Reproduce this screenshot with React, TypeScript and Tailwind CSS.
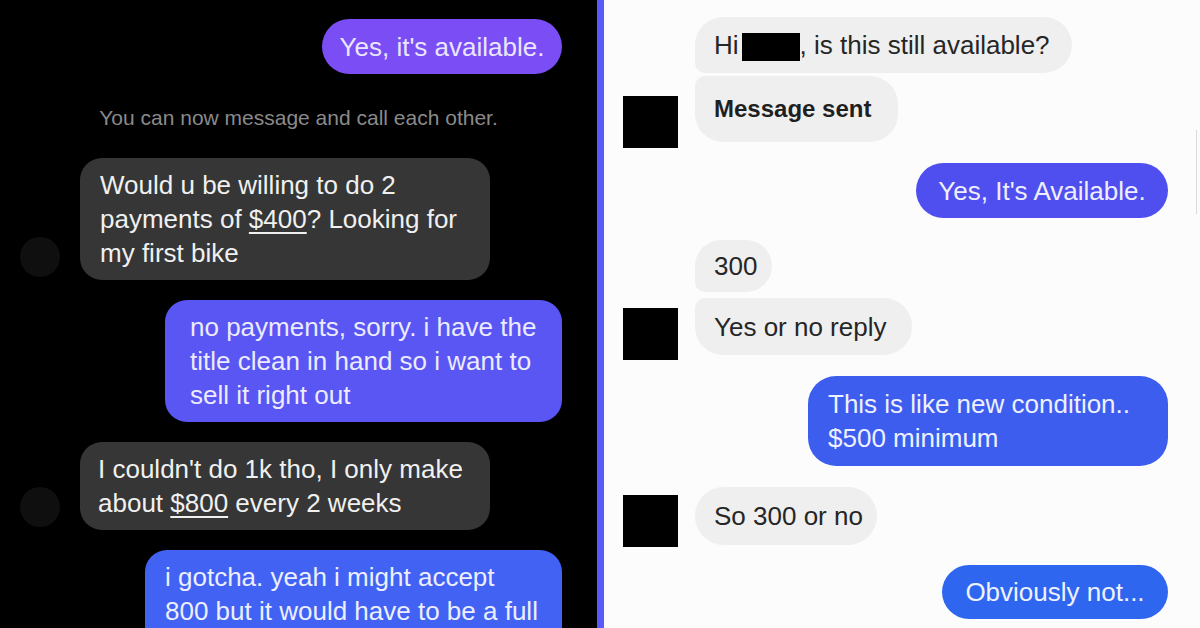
import React from "react";

const font = { fontFamily: '"Liberation Sans", Arial, sans-serif' };

function LeftAvatar() {
  return <div className="w-[40px] h-[40px] rounded-full bg-[#0f0f0f] shrink-0 mb-[3px]" />;
}

function RightAvatar({ mb }: { mb: string }) {
  return <div className={`w-[55px] h-[52px] bg-black shrink-0 ${mb}`} />;
}

export default function App() {
  return (
    <div className="w-[1200px] h-[628px] flex overflow-hidden" style={font}>
      {/* Left dark panel */}
      <div className="w-[597px] h-full bg-black flex flex-col overflow-hidden">
        <div className="ml-[95px] w-[165px] h-[3px] bg-[#2a2a2a] rounded-b-[3px]" />
        <div className="mt-[19px] flex justify-end pr-[35px]">
          <div className="w-[240px] h-[55px] rounded-full bg-[#7a4df5] text-[#ebe6ff] text-[26px] leading-[34px] flex items-center justify-center whitespace-nowrap">
            Yes, it's available.
          </div>
        </div>
        <div className="mt-[32px] text-center text-[21px] leading-[24px] text-[#8a8a8a] whitespace-nowrap">
          You can now message and call each other.
        </div>
        <div className="mt-[28px] flex items-end pl-[20px] gap-[20px]">
          <LeftAvatar />
          <div className="w-[410px] rounded-[22px] bg-[#363636] text-[#f0f0f0] text-[26px] leading-[34px] pl-[20px] py-[10px] whitespace-nowrap">
            Would u be willing to do 2<br />
            payments of <span className="underline underline-offset-[4px]">$400</span>? Looking for<br />
            my first bike
          </div>
        </div>
        <div className="mt-[20px] flex justify-end pr-[35px]">
          <div className="w-[397px] rounded-[22px] bg-[#5956f3] text-[#ecebff] text-[26px] leading-[34px] pl-[25px] py-[10px] whitespace-nowrap">
            no payments, sorry. i have the<br />
            title clean in hand so i want to<br />
            sell it right out
          </div>
        </div>
        <div className="mt-[20px] flex items-end pl-[20px] gap-[20px]">
          <LeftAvatar />
          <div className="w-[410px] rounded-[22px] bg-[#363636] text-[#f0f0f0] text-[26px] leading-[34px] pl-[18px] py-[10px] whitespace-nowrap">
            I couldn't do 1k tho, I only make<br />
            about <span className="underline underline-offset-[4px]">$800</span> every 2 weeks
          </div>
        </div>
        <div className="mt-[20px] flex justify-end pr-[35px]">
          <div className="w-[417px] rounded-[22px] bg-[#4262f4] text-[#ecefff] text-[26px] leading-[34px] pl-[20px] pt-[10px] pb-[40px] whitespace-nowrap">
            i gotcha. yeah i might accept<br />
            800 but it would have to be a full
          </div>
        </div>
      </div>

      {/* Divider */}
      <div className="w-[7px] h-full bg-[#5a5afc]" />

      {/* Right light panel */}
      <div className="relative flex-1 h-full bg-[#fcfcfc] flex flex-col pt-[17px] overflow-hidden">
        <div className="absolute right-[3px] top-[130px] w-[1px] h-[84px] bg-[#d9d9d9]" />
        <div className="flex items-end pl-[19px] gap-[17px]">
          <RightAvatar mb="mb-[-6px]" />
          <div className="flex flex-col items-start gap-[3px]">
            <div className="h-[56px] rounded-[28px] rounded-bl-[10px] bg-[#efefef] text-[#262626] text-[26px] leading-[34px] pl-[19px] pr-[22px] flex items-center whitespace-nowrap">
              Hi
              <span className="inline-block w-[58px] h-[28px] bg-black ml-[3px] mt-[4px]" />
              , is this still available?
            </div>
            <div className="w-[203px] h-[66px] rounded-[28px] rounded-tl-[10px] bg-[#efefef] text-[#1f1f1f] text-[24px] font-bold leading-[34px] pl-[19px] flex items-center whitespace-nowrap">
              Message sent
            </div>
          </div>
        </div>
        <div className="mt-[21px] flex justify-end pr-[32px]">
          <div className="w-[252px] h-[55px] rounded-full bg-[#4f4fef] text-[#eeeeff] text-[26px] leading-[34px] flex items-center justify-center whitespace-nowrap">
            Yes, It's Available.
          </div>
        </div>
        <div className="mt-[22px] flex items-end pl-[19px] gap-[17px]">
          <RightAvatar mb="mb-[-5px]" />
          <div className="flex flex-col items-start gap-[6px]">
            <div className="w-[77px] h-[52px] rounded-[26px] rounded-bl-[10px] bg-[#efefef] text-[#262626] text-[26px] leading-[34px] pl-[19px] flex items-center whitespace-nowrap">
              300
            </div>
            <div className="w-[217px] h-[57px] rounded-[28px] rounded-tl-[10px] bg-[#efefef] text-[#262626] text-[26px] leading-[34px] pl-[19px] flex items-center whitespace-nowrap">
              Yes or no reply
            </div>
          </div>
        </div>
        <div className="mt-[21px] flex justify-end pr-[32px]">
          <div className="w-[360px] h-[90px] rounded-[28px] bg-[#3d5def] text-[#eef0ff] text-[26px] leading-[34px] pl-[20px] flex flex-col justify-center whitespace-nowrap">
            <span>This is like new condition..</span>
            <span>$500 minimum</span>
          </div>
        </div>
        <div className="mt-[21px] flex items-end pl-[19px] gap-[17px]">
          <RightAvatar mb="mb-[-2px]" />
          <div className="w-[182px] h-[58px] rounded-[29px] bg-[#efefef] text-[#262626] text-[26px] leading-[34px] pl-[19px] flex items-center whitespace-nowrap">
            So 300 or no
          </div>
        </div>
        <div className="mt-[20px] flex justify-end pr-[32px]">
          <div className="w-[226px] h-[54px] rounded-full bg-[#2f66ef] text-[#eef2ff] text-[26px] leading-[34px] flex items-center justify-center whitespace-nowrap">
            Obviously not...
          </div>
        </div>
      </div>
    </div>
  );
}
